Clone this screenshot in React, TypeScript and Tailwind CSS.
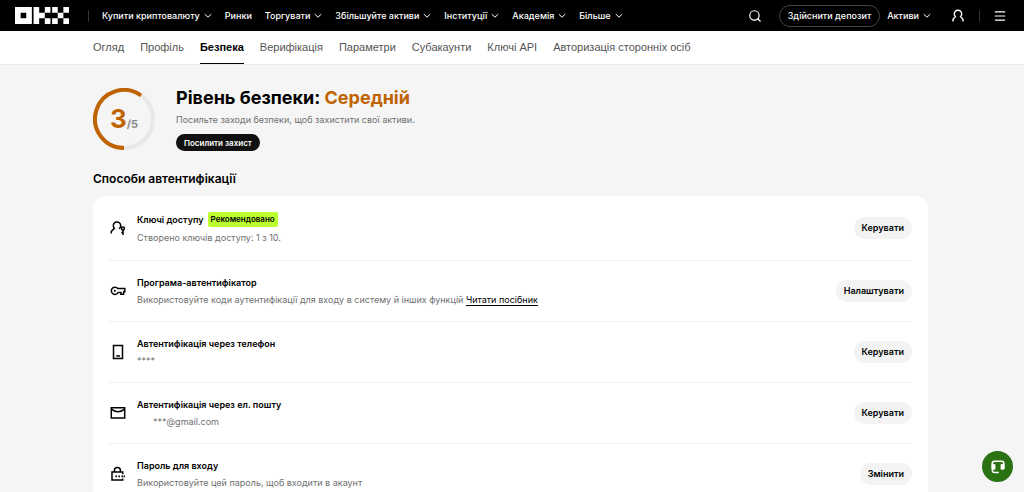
import { useState } from "react";
import type { ReactNode } from "react";
import { clsx } from "clsx";
import { Menu, Search } from "lucide-react";

const NAV = [
  { label: "Купити криптовалюту", menu: true },
  { label: "Ринки", menu: false },
  { label: "Торгувати", menu: true },
  { label: "Збільшуйте активи", menu: true },
  { label: "Інституції", menu: true },
  { label: "Академія", menu: true },
  { label: "Більше", menu: true },
];

const TABS = [
  "Огляд",
  "Профіль",
  "Безпека",
  "Верифікація",
  "Параметри",
  "Субакаунти",
  "Ключі API",
  "Авторизація сторонніх осіб",
];

function Logo() {
  return (
    <svg viewBox="0 0 96 30" className="h-[17px] w-[54px] fill-white" role="img" aria-label="OKX">
      <path fillRule="evenodd" d="M0 0h30v30H0zM10 10v10h10V10z" />
      <path d="M33 0h10v10h10v10H43v10H33zM53 0h10v10H53zM53 20h10v10H53z" />
      <path d="M66 0h10v10H66zM86 0h10v10H86zM76 10h10v10H76zM66 20h10v10H66zM86 20h10v10H86z" />
    </svg>
  );
}

function Chevron() {
  return (
    <svg viewBox="0 0 8 8" className="size-2 fill-none stroke-white">
      <path d="M.8 2.2 4 5.2l3.2-3" />
    </svg>
  );
}

function UserIcon() {
  return (
    <svg viewBox="0 0 16 16" className="size-4 fill-none stroke-white" strokeWidth="1.4">
      <path d="M3 13.4v-2.2L5.4 8.6a3.7 3.7 0 1 1 5.2 0l2.4 2.6v2.2" />
    </svg>
  );
}

function PasskeyIcon() {
  return (
    <svg viewBox="0 0 16 16" className="size-4 fill-none stroke-black" strokeWidth="1.5">
      <path d="M1.3 13.4v-2L4.4 8.3a3.7 3.7 0 1 1 5.2 0l.5.5" />
      <circle cx="12.9" cy="8.6" r="1.5" />
      <path d="M13 10v5M11.3 12.6H13" />
    </svg>
  );
}

function KeyIcon() {
  return (
    <svg viewBox="0 0 16 16" className="size-4 fill-none stroke-black" strokeWidth="1.5">
      <path d="M7.8 5.6h7v3.1h-1.2v2.5h-2.7V9.5H8.1A3.6 3.6 0 1 1 7.8 5.6z" />
      <circle cx="4.8" cy="7.8" r="1.1" className="fill-black stroke-none" />
    </svg>
  );
}

function PhoneIcon() {
  return (
    <svg viewBox="0 0 16 16" className="size-4 fill-none stroke-black" strokeWidth="1.5">
      <path d="M3.5 1.5h9v13h-9zM6.2 12h3.8" />
    </svg>
  );
}

function MailIcon() {
  return (
    <svg viewBox="0 0 16 16" className="size-4 fill-none stroke-black" strokeWidth="1.5">
      <path d="M1.3 2.7h13.4v10.4H1.3zM1.3 4.2Q8 9.4 14.7 4.2" />
    </svg>
  );
}

function LockIcon() {
  return (
    <svg viewBox="0 0 16 16" className="size-4 fill-none stroke-black" strokeWidth="1.5">
      <path d="M12.7 8.2V6.1H2v7.8h10.7v-1.5M4.4 6.1V4.5a3 3 0 0 1 6 0v1.6" />
      <path d="M5.4 10.3H7M8.4 10.3H10M11.4 10.3H13M13.6 10.3h1.4" strokeWidth="1.8" />
    </svg>
  );
}

function SupportIcon() {
  return (
    <svg viewBox="0 0 16 16" className="size-4 fill-none stroke-white" strokeWidth="1.5">
      <path d="M2.2 10V4.4c0-1.2.9-2.1 2.1-2.1h7.4c1.2 0 2.1.9 2.1 2.1V10" />
      <path d="M2 5.4h3v4.8H2zM11 5.4h3v4.8h-3z" className="fill-white" strokeWidth="0.8" />
      <path d="M2.4 10v1.4c0 1.2.8 2 2 2h4.4" />
    </svg>
  );
}

interface MethodProps {
  icon: ReactNode;
  title: string;
  badge?: string;
  action: string;
  children: ReactNode;
}

function Method({ icon, title, badge, action, children }: MethodProps) {
  return (
    <li
      className={clsx(
        "flex items-center border-b border-[#f0f0f0]",
        badge ? "py-[14px]" : "py-[13px]"
      )}
    >
      <span className="mr-[11px] ml-px shrink-0">{icon}</span>
      <div className="min-w-0 flex-1">
        <h3
          className={clsx(
            "flex items-center gap-1 text-[9px] font-semibold text-black",
            badge ? "leading-[19px]" : "leading-[17px]"
          )}
        >
          {title}
          {badge && (
            <span className="rounded-xs bg-[#bcff2f] px-[3px] text-[8px] leading-[15px]">
              {badge}
            </span>
          )}
        </h3>
        <p className="text-[9px] leading-[17px] text-[#707070]">{children}</p>
      </div>
      <button className="h-[22px] rounded-full bg-[#f3f3f3] px-2 text-[9px] font-semibold text-black">
        {action}
      </button>
    </li>
  );
}

export default function App() {
  const [tab, setTab] = useState("Безпека");

  return (
    <div className="min-h-screen bg-[#f5f5f5] font-['Inter','Liberation_Sans',sans-serif] text-black">
      <header className="flex h-[31px] items-center bg-black pr-[17px] pl-[15px] text-[9px] font-medium text-white">
        <a href="#">
          <Logo />
        </a>
        <span className="mr-[13px] ml-[19px] h-3 w-px bg-[#333]" />
        <nav className="flex items-center gap-[13px] whitespace-nowrap">
          {NAV.map((item) => (
            <a key={item.label} href="#" className="flex items-center gap-1">
              {item.label}
              {item.menu && <Chevron />}
            </a>
          ))}
        </nav>
        <div className="ml-auto flex items-center whitespace-nowrap">
          <button aria-label="Пошук" className="mr-[17px]">
            <Search className="size-[14px]" />
          </button>
          <button className="h-[22px] rounded-full border border-[#444] px-2">
            Здійснити депозит
          </button>
          <a href="#" className="ml-[7px] flex items-center gap-1">
            Активи
            <Chevron />
          </a>
          <button aria-label="Обліковий запис" className="ml-[19px]">
            <UserIcon />
          </button>
          <span className="mx-[13px] h-3 w-px bg-[#333]" />
          <button aria-label="Меню">
            <Menu className="size-[14px]" />
          </button>
        </div>
      </header>

      <nav className="flex h-[34px] gap-4 border-b border-[#ebebeb] bg-white pl-[93px] font-['Liberation_Sans',sans-serif] text-[11px] whitespace-nowrap">
        {TABS.map((name) => (
          <a
            key={name}
            href="#"
            onClick={() => setTab(name)}
            className={clsx(
              "flex items-center border-b",
              tab === name
                ? "border-black font-semibold text-black"
                : "border-transparent font-medium text-[#555]"
            )}
          >
            {name}
          </a>
        ))}
      </nav>

      <main className="mr-24 ml-[93px]">
        <section className="flex items-center gap-[21px] pt-[21px]">
          <div className="relative size-[62px]">
            <svg viewBox="0 0 62 62" className="size-full fill-none" strokeWidth="4">
              <circle cx="31" cy="31" r="29" className="stroke-[#e8e8e8]" />
              <path d="M31 60A29 29 0 1 1 48 7.5" className="stroke-[#bf6300]" />
            </svg>
            <p className="absolute inset-0 flex items-baseline justify-center pt-[13px] font-bold">
              <span className="text-[26px] leading-9 text-[#bf6300]">3</span>
              <span className="text-[11px] text-[#888]">/5</span>
            </p>
          </div>
          <div>
            <h1 className="text-[18px] leading-6 font-bold">
              Рівень безпеки: <span className="text-[#bf6300]">Середній</span>
            </h1>
            <p className="text-[9px] leading-5 text-[#707070]">
              Посильте заходи безпеки, щоб захистити свої активи.
            </p>
            <button className="mt-1 block h-[17px] rounded-full bg-[#111] px-2 text-[8px] font-semibold text-white">
              Посилити захист
            </button>
          </div>
        </section>

        <section>
          <h2 className="mt-[18px] mb-[7px] text-[12px] leading-5 font-semibold">
            Способи автентифікації
          </h2>
          <ul className="rounded-t-xl bg-white px-4">
            <Method icon={<PasskeyIcon />} title="Ключі доступу" badge="Рекомендовано" action="Керувати">
              Створено ключів доступу: 1 з 10.
            </Method>
            <Method icon={<KeyIcon />} title="Програма-автентифікатор" action="Налаштувати">
              Використовуйте коди аутентифікації для входу в систему й інших функцій{" "}
              <a href="#" className="border-b border-black text-black">
                Читати посібник
              </a>
            </Method>
            <Method icon={<PhoneIcon />} title="Автентифікація через телефон" action="Керувати">
              ****
            </Method>
            <Method icon={<MailIcon />} title="Автентифікація через ел. пошту" action="Керувати">
              <span className="pl-4">***@gmail.com</span>
            </Method>
            <Method icon={<LockIcon />} title="Пароль для входу" action="Змінити">
              Використовуйте цей пароль, щоб входити в акаунт
            </Method>
          </ul>
        </section>
      </main>

      <button
        aria-label="Підтримка"
        className="fixed right-[11px] bottom-[10px] flex size-[31px] items-center justify-center rounded-full bg-[#2b7215]"
      >
        <SupportIcon />
      </button>
    </div>
  );
}
